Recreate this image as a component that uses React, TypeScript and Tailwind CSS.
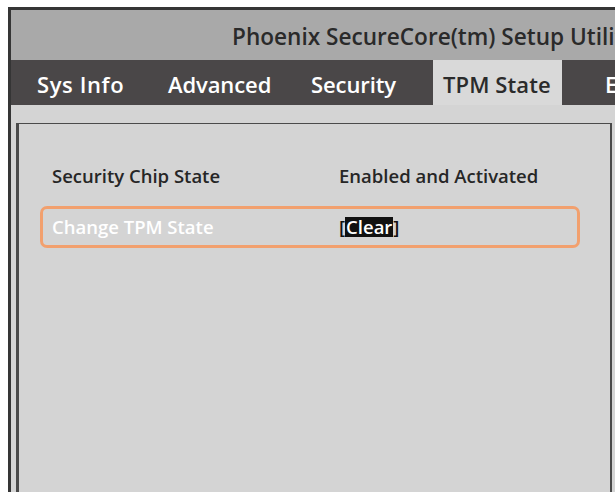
import { useState } from "react";

// tab labels with the width of each tab cell
const tabs = [
  { name: "Sys Info", cell: "w-[131px] pl-[10px] tracking-[0.6px]" },
  { name: "Advanced", cell: "w-[143px] pl-[10px] tracking-[-0.1px]" },
  { name: "Security", cell: "w-[132px] pl-[10px] tracking-[-0.1px]" },
  { name: "TPM State", cell: "w-[129px] pl-[10px] tracking-[0.1px]" },
  { name: "Exit", cell: "w-[90px] pl-[43px]" },
];

const rows = [
  { label: "Security Chip State", value: "Enabled and Activated" },
  { label: "Change TPM State", value: "Clear" },
];

const App = () => {
  const [activeTab] = useState<string>("TPM State");
  const [selected] = useState<number>(1);

  return (
    <div
      className="w-[615px] h-[496px] bg-white overflow-hidden pt-[7px] pl-[8px]"
      style={{ fontFamily: "'Open Sans', sans-serif" }}
    >
      <div className="w-[640px] h-[485px] border-l-[3px] border-t-[3px] border-[#353535] flex flex-col">
        {/* Title */}
        <div className="h-[50px] bg-[#a9a9a9] flex items-center pl-[221px] pt-[4px] whitespace-nowrap">
          <p className="text-[22.6px] font-semibold text-[#2a2a2a]">
            Phoenix SecureCore(tm) Setup Utility
          </p>
        </div>

        {/* Tabs */}
        <div className="h-[45px] bg-[#4a4748] flex pl-[16px] whitespace-nowrap">
          {tabs.map((tab) => (
            <div
              key={tab.name}
              className={`${tab.cell} shrink-0 flex items-center pt-[3px] text-[22px] font-semibold ${
                activeTab == tab.name ? "bg-[#d9d9d9] text-[#2b2b2b]" : "text-white"
              }`}
            >
              {tab.name}
            </div>
          ))}
        </div>

        {/* Body */}
        <div className="flex-1 bg-[#d4d4d4] pl-[5px] pt-[18px]">
          <div className="h-full w-[596px] border-l-[3px] border-t border-r-2 border-[#4a4a4a] pt-[40px] pl-[21px]">
            {rows.map((row, index) => (
              <div
                key={row.label}
                className={`flex items-center text-[18.5px] font-semibold w-[540px] ${
                  selected == index
                    ? "h-[42px] mt-[18px] border-[3px] border-[#f2a06e] rounded-[7px] pl-[9px] text-white"
                    : "h-[24px] pl-[12px] text-[#262626]"
                }`}
              >
                <p className="w-[287px] shrink-0">{row.label}</p>
                {selected == index ? (
                  <p className="text-[#111] flex items-center">
                    [<span className="bg-[#111] text-white px-[1px] leading-[20px]">{row.value}</span>]
                  </p>
                ) : (
                  <p>{row.value}</p>
                )}
              </div>
            ))}
          </div>
        </div>
      </div>
    </div>
  );
};

export default App;
